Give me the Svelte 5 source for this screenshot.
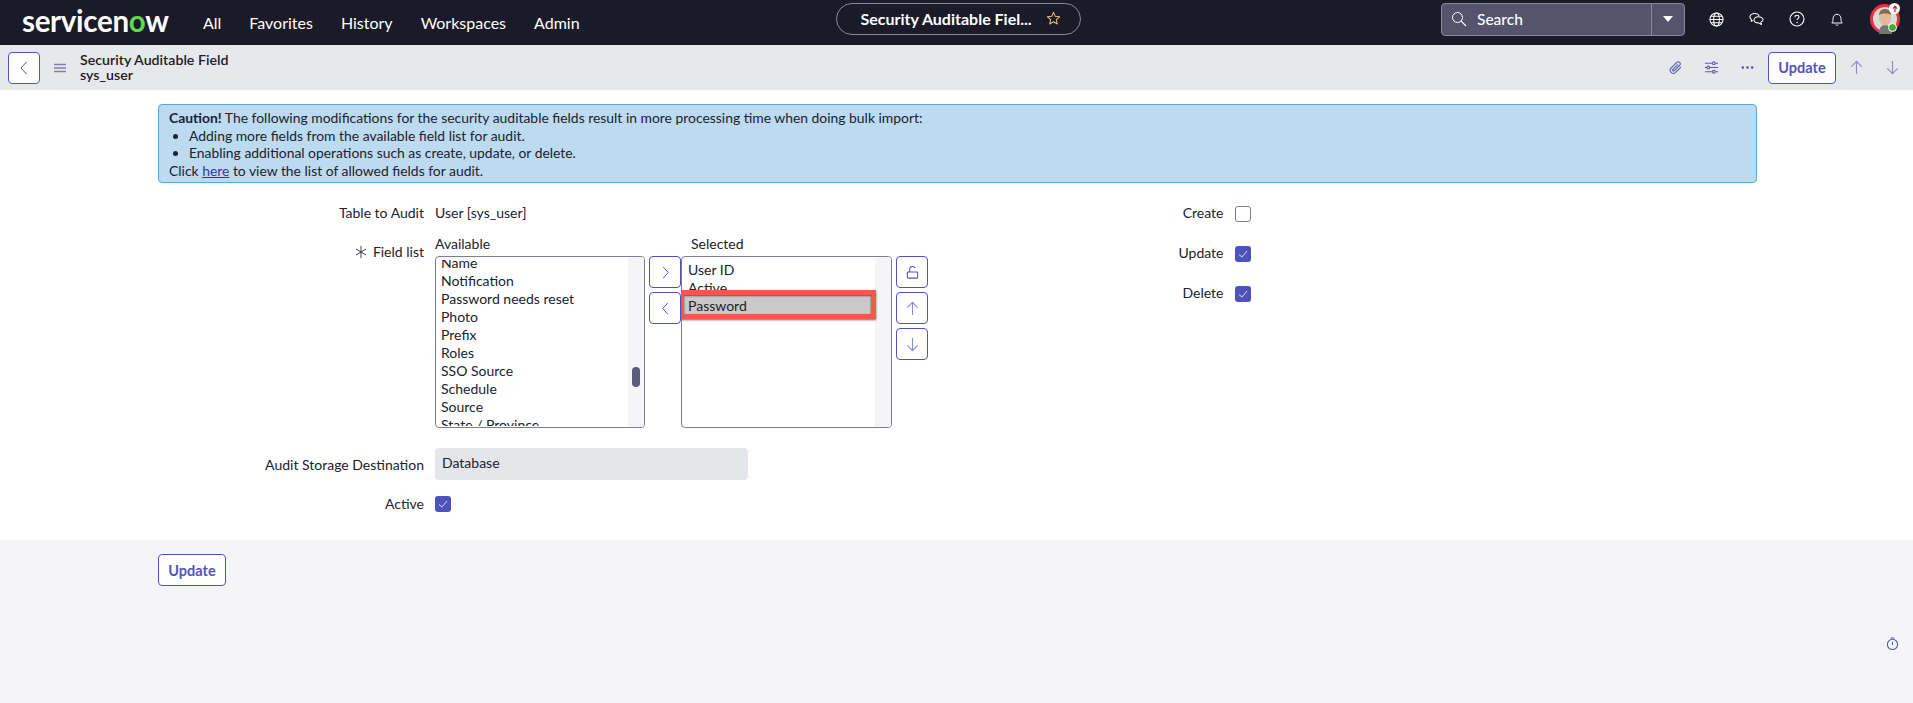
<script>
  const nav = ['All', 'Favorites', 'History', 'Workspaces', 'Admin'];
  const available = ['Name', 'Notification', 'Password needs reset', 'Photo', 'Prefix', 'Roles', 'SSO Source', 'Schedule', 'Source', 'State / Province'];
  const selected = ['User ID', 'Active', 'Password'];
  const ops = [
    { label: 'Create', checked: false },
    { label: 'Update', checked: true },
    { label: 'Delete', checked: true }
  ];
</script>

<div class="page">
  <!-- Top navigation -->
  <header class="topbar">
    <div class="top-left">
      <span class="logo">servicen<span class="logo-o">o</span>w</span>
      <nav class="nav">
        {#each nav as item}
          <span class="nav-item">{item}</span>
        {/each}
      </nav>
    </div>
    <div class="pill">
      <span class="pill-title">Security Auditable Fiel...</span>
      <svg class="star" viewBox="0 0 16 16" width="15" height="15"><path d="M8 1.5l1.9 4.2 4.6.5-3.4 3.1.9 4.5-4-2.3-4 2.3.9-4.5L1.500 6.200l4.600-.5z" fill="none" stroke="#e9c46a" stroke-width="1.100" stroke-linejoin="round"/></svg>
    </div>
    <div class="top-right">
      <div class="search">
        <div class="search-main">
          <svg viewBox="0 0 16 16" width="16" height="16"><circle cx="6.500" cy="6.500" r="5" fill="none" stroke="#fff" stroke-width="1"/><path d="M10.200 10.200L15 15" stroke="#fff" stroke-width="1.100"/></svg>
          <span>Search</span>
        </div>
        <div class="search-caret"><span class="caret"></span></div>
      </div>
      <div class="top-icons">
        <svg viewBox="0 0 16 16" width="15" height="15"><g fill="none" stroke="#fff" stroke-width="1.100"><circle cx="8" cy="8" r="7"/><ellipse cx="8" cy="8" rx="3" ry="7"/><path d="M1 8h14M2 4.500h12M2 11.500h12"/></g></svg>
        <svg viewBox="0 0 16 16" width="15" height="15"><g fill="none" stroke="#fff" stroke-width="1.100" stroke-linejoin="round"><path d="M6 1.500c-2.700 0-5 1.500-5 3.700 0 1.200.7 2.200 1.700 2.900L2.300 10l2.300-1.100"/><path d="M6 1.500c2.400 0 4.300 1.100 4.800 2.800"/><path d="M10 5c-2.600 0-4.700 1.400-4.700 3.300s2.100 3.300 4.700 3.300l3.200 1.700-.5-2.500c1.400-.6 2.300-1.500 2.300-2.500C15 6.400 12.700 5 10 5z"/></g></svg>
        <svg viewBox="0 0 16 16" width="16" height="16"><circle cx="8" cy="8" r="7" fill="none" stroke="#fff" stroke-width="1.100"/><path d="M6 6.200c0-1.200.9-1.900 2-1.900s2 .7 2 1.800c0 1.500-2 1.500-2 3" fill="none" stroke="#fff" stroke-width="1.100"/><circle cx="8" cy="11.500" r=".7" fill="#fff"/></svg>
        <svg viewBox="0 0 16 16" width="14" height="15"><path d="M2 12c1-1 1.500-2 1.500-5S5.500 2 8 2s4.500 2 4.500 5 .5 4 1.500 5z M6.500 14c.5.700 2.500.700 3 0" fill="none" stroke="#fff" stroke-width="1.100" stroke-linejoin="round"/></svg>
      </div>
      <div class="avatar">
        <svg viewBox="0 0 30 30" width="30" height="30">
          <circle cx="15" cy="15" r="13.500" fill="#d8dcd8" stroke="#ee2f44" stroke-width="3"/>
          <path d="M9 30c0-7 3-9 6-9s7 2 7 9z" fill="#6d7a72"/>
          <ellipse cx="15" cy="14" rx="6" ry="7.500" fill="#e2b79a"/>
          <path d="M9 11c0-4 3-6 6-6s6 2 6 6c-2-2-9-2-12 0z" fill="#8a6a4c"/>
        </svg>
        <span class="badge-up"><svg viewBox="0 0 10 10" width="8" height="8"><path d="M5 9V2M2.500 4.500L5 1.500l2.500 3" fill="none" stroke="#c8202f" stroke-width="1.500"/></svg></span>
        <span class="badge-on"></span>
      </div>
    </div>
  </header>

  <!-- Form header -->
  <div class="subbar">
    <div class="sub-left">
      <button class="btn icon-btn">
        <svg viewBox="0 0 16 16" width="16" height="16"><path d="M10.500 2L5 8l5.500 6" fill="none" stroke="#4f52bd" stroke-width="1"/></svg>
      </button>
      <svg class="burger" viewBox="0 0 12 10" width="12" height="10"><path d="M0 1.500h12M0 5h12M0 8.500h12" stroke="#7f82a8" stroke-width="1.400"/></svg>
      <div class="sub-title">
        <div>Security Auditable Field</div>
        <div>sys_user</div>
      </div>
    </div>
    <div class="sub-right">
      <svg viewBox="0 0 16 16" width="15" height="15"><path d="M13.800 7.500l-5.700 5.700a3.300 3.300 0 0 1-4.700-4.700l6-6a2.200 2.200 0 0 1 3.100 3.100l-5.800 5.800a1 1 0 0 1-1.500-1.500l5.300-5.200" fill="none" stroke="#5a5da8" stroke-width="1.200"/></svg>
      <svg viewBox="0 0 16 16" width="15" height="15"><g fill="none" stroke="#5a5da8" stroke-width="1.200"><path d="M1 3.500h8M12 3.500h3M1 8h2M6 8h9M1 12.500h8M12 12.500h3"/><circle cx="10.500" cy="3.500" r="1.500"/><circle cx="4.500" cy="8" r="1.500"/><circle cx="10.500" cy="12.500" r="1.500"/></g></svg>
      <svg viewBox="0 0 16 16" width="15" height="15"><g fill="#4f52a8"><circle cx="3" cy="8" r="1.300"/><circle cx="8" cy="8" r="1.300"/><circle cx="13" cy="8" r="1.300"/></g></svg>
      <button class="btn text-btn">Update</button>
      <svg class="arrow-a" viewBox="0 0 16 16" width="15" height="15"><path d="M8 15V1.500M2.500 7L8 1.500 13.500 7" fill="none" stroke="#8a8dc0" stroke-width="1.200"/></svg>
      <svg class="arrow-b" viewBox="0 0 16 16" width="15" height="15"><path d="M8 1v13.500M2.500 9L8 14.500 13.500 9" fill="none" stroke="#8a8dc0" stroke-width="1.200"/></svg>
    </div>
  </div>

  <main class="main">
    <div class="caution">
      <div><b>Caution!</b> The following modifications for the security auditable fields result in more processing time when doing bulk import:</div>
      <ul>
        <li>Adding more fields from the available field list for audit.</li>
        <li>Enabling additional operations such as create, update, or delete.</li>
      </ul>
      <div>Click <a href="#here">here</a> to view the list of allowed fields for audit.</div>
    </div>

    <div class="form">
      <div class="col">
        <div class="row">
          <div class="label">Table to Audit</div>
          <div>User [sys_user]</div>
        </div>

        <div class="row row-lists">
          <div class="label label-field">
            <svg viewBox="0 0 12 12" width="12" height="12"><path d="M6 0v12M1 3l10 6M11 3L1 9" stroke="#2a2c3c" stroke-width=".9"/></svg>
            Field list
          </div>
          <div class="slush">
            <div class="slush-col">
              <div class="slush-head">Available</div>
              <div class="listbox avail">
                <div class="items items-avail">
                  {#each available as item}
                    <div class="item">{item}</div>
                  {/each}
                </div>
                <div class="track"><span class="thumb"></span></div>
              </div>
            </div>
            <div class="slush-btns">
              <button class="btn icon-btn">
                <svg viewBox="0 0 16 16" width="15" height="15"><path d="M5.500 2L11 8l-5.500 6" fill="none" stroke="#4f52bd" stroke-width="1"/></svg>
              </button>
              <button class="btn icon-btn">
                <svg viewBox="0 0 16 16" width="15" height="15"><path d="M10.500 2L5 8l5.500 6" fill="none" stroke="#4f52bd" stroke-width="1"/></svg>
              </button>
            </div>
            <div class="slush-col">
              <div class="slush-head head-sel">Selected</div>
              <div class="listbox sel">
                <div class="items items-sel">
                  {#each selected as item}
                    <div class="item">{item}</div>
                  {/each}
                </div>
                <div class="track"></div>
                <div class="highlight"><span>Password</span></div>
              </div>
            </div>
            <div class="slush-btns btns-right">
              <button class="btn icon-btn">
                <svg viewBox="0 0 16 16" width="15" height="15"><g fill="none" stroke="#4f52bd" stroke-width="1.100"><rect x="2.500" y="7.500" width="11" height="6.500" rx="1"/><path d="M5 7.500V4.500a3 3 0 0 1 5.800-1"/></g></svg>
              </button>
              <button class="btn icon-btn">
                <svg viewBox="0 0 16 16" width="15" height="15"><path d="M8 15V1.500M2.500 7L8 1.500 13.500 7" fill="none" stroke="#8a8dd8" stroke-width="1.200"/></svg>
              </button>
              <button class="btn icon-btn">
                <svg viewBox="0 0 16 16" width="15" height="15"><path d="M8 1v13.500M2.500 9L8 14.500 13.500 9" fill="none" stroke="#8a8dd8" stroke-width="1.200"/></svg>
              </button>
            </div>
          </div>
        </div>

        <div class="row row-dest">
          <div class="label">Audit Storage Destination</div>
          <div class="readonly">Database</div>
        </div>

        <div class="row row-active">
          <div class="label">Active</div>
          <span class="check on">
            <svg viewBox="0 0 16 16" width="16" height="16"><path d="M4 8.500L7 11l5-6" fill="none" stroke="#d8d9f3" stroke-width="1"/></svg>
          </span>
        </div>
      </div>

      <div class="col col-ops">
        {#each ops as op}
          <div class="row">
            <div class="label">{op.label}</div>
            <span class="check" class:on={op.checked}>
              {#if op.checked}
                <svg viewBox="0 0 16 16" width="16" height="16"><path d="M4 8.500L7 11l5-6" fill="none" stroke="#d8d9f3" stroke-width="1"/></svg>
              {/if}
            </span>
          </div>
        {/each}
      </div>
    </div>
  </main>

  <footer class="footer">
    <button class="btn text-btn">Update</button>
    <svg class="timer" viewBox="0 0 14 14" width="13" height="13"><g fill="none" stroke="#4f52a8" stroke-width="1.100"><circle cx="7" cy="8" r="5.500"/><path d="M5 1h4M7 5.500v3"/></g></svg>
  </footer>
</div>

<style>
  :global(body) {
    margin: 0;
    font-family: Lato, 'Liberation Sans', sans-serif;
    font-size: 14px;
    color: #20222f;
  }

  .page {
    display: flex;
    flex-direction: column;
    height: 703px;
    overflow: hidden;
  }

  .topbar {
    display: grid;
    grid-template-columns: 1fr auto 1fr;
    align-items: center;
    height: 45px;
    background: #1a1a28;
    color: #fff;
  }

  .top-left {
    display: flex;
    align-items: center;
    padding-left: 22px;
  }

  .logo {
    width: 148px;
    margin-top: -4px;
    font-size: 29.500px;
    line-height: 36px;
    font-weight: 700;
    letter-spacing: -0.3px;
    color: #fff;
  }

  .logo-o {
    color: #62d84e;
  }

  .nav {
    display: flex;
    gap: 28px;
    margin-left: 33px;
    font-size: 16px;
  }

  .pill {
    display: flex;
    align-items: center;
    justify-content: space-between;
    box-sizing: border-box;
    width: 245px;
    height: 32px;
    margin-top: -8px;
    margin-left: 3px;
    padding: 0 19px 0 24px;
    border: 1px solid #8a8a96;
    border-radius: 16px;
    font-size: 16px;
    font-weight: 700;
  }

  .top-right {
    display: flex;
    align-items: center;
    justify-content: flex-end;
    padding-right: 13px;
    margin-top: -7px;
  }

  .search {
    display: flex;
    box-sizing: border-box;
    width: 244px;
    height: 33px;
    background: #56546c;
    border: 1px solid #86859a;
    border-radius: 4px;
  }

  .search-main {
    display: flex;
    align-items: center;
    gap: 10px;
    flex: 1;
    padding-left: 9px;
    font-size: 15.500px;
    font-weight: 500;
    border-right: 1px solid #86859a;
  }

  .search-caret {
    display: flex;
    align-items: center;
    justify-content: center;
    width: 32px;
  }

  .caret {
    width: 0;
    height: 0;
    border-left: 5.500px solid transparent;
    border-right: 5.500px solid transparent;
    border-top: 6px solid #fff;
  }

  .top-icons {
    display: flex;
    align-items: center;
    gap: 25px;
    margin-left: 24px;
  }

  .avatar {
    position: relative;
    width: 30px;
    height: 30px;
    margin-left: 26px;
  }

  .badge-up {
    position: absolute;
    top: -1px;
    right: 0;
    display: flex;
    align-items: center;
    justify-content: center;
    width: 11px;
    height: 11px;
    background: #fff;
    border-radius: 50%;
  }

  .badge-on {
    position: absolute;
    right: 3px;
    bottom: 2px;
    width: 7px;
    height: 7px;
    background: #49a832;
    border: 1px solid #fff;
    border-radius: 50%;
  }

  .subbar {
    display: flex;
    justify-content: space-between;
    align-items: center;
    box-sizing: border-box;
    height: 45px;
    background: #e6e8ec;
    padding: 0 13px 0 8px;
  }

  .sub-left {
    display: flex;
    align-items: center;
  }

  .burger {
    margin-left: 14px;
  }

  .sub-title {
    margin: -2px 0 0 14px;
    font-size: 14.200px;
    line-height: 15px;
    font-weight: 600;
    color: #1a1c28;
  }

  .sub-right {
    display: flex;
    align-items: center;
  }

  .sub-right svg {
    margin-right: 21px;
  }

  .sub-right .arrow-a {
    margin-left: 13px;
  }

  .sub-right .arrow-b {
    margin-right: 0;
  }

  .sub-right .text-btn {
    margin-left: -8px;
  }

  .btn {
    display: flex;
    align-items: center;
    justify-content: center;
    box-sizing: border-box;
    height: 32px;
    padding: 0;
    background: #fff;
    border: 1px solid #4f52bd;
    border-radius: 4px;
    font-family: inherit;
    color: #4f52bd;
  }

  .icon-btn {
    width: 32px;
  }

  .text-btn {
    width: 68px;
    font-size: 14.500px;
    font-weight: 700;
  }

  .main {
    box-sizing: border-box;
    height: 450px;
    background: #fff;
    padding: 14px 156px 0 158px;
  }

  .caution {
    box-sizing: border-box;
    height: 79px;
    padding: 4px 10px;
    background: #bcdaf0;
    border: 1px solid #5aa6e0;
    border-radius: 4px;
    font-size: 13.900px;
    line-height: 17.600px;
  }

  .caution ul {
    margin: 0;
    padding-left: 20px;
  }

  .caution a {
    color: #2f3a9e;
  }

  .form {
    display: grid;
    grid-template-columns: 1fr 1fr;
    margin-top: 19px;
  }

  .col {
    display: flex;
    flex-direction: column;
  }

  .col-ops {
    gap: 20px;
  }

  .row {
    display: flex;
    align-items: center;
    gap: 11px;
    min-height: 20px;
  }

  .label {
    flex: none;
    width: 266px;
    text-align: right;
  }

  .row-lists {
    align-items: flex-start;
    margin-top: 13px;
  }

  .label-field {
    display: flex;
    justify-content: flex-end;
    align-items: center;
    gap: 6px;
    padding-top: 8px;
  }

  .slush {
    display: flex;
    margin-top: 0;
  }

  .slush-head {
    height: 21px;
    line-height: 18px;
  }

  .head-sel {
    padding-left: 10px;
  }

  .slush-btns {
    display: flex;
    flex-direction: column;
    gap: 4px;
    padding-top: 21px;
    margin: 0 0 0 4px;
  }

  .btns-right {
    margin-left: 4px;
  }

  .listbox {
    position: relative;
    box-sizing: border-box;
    display: flex;
    height: 172px;
    background: #fff;
    border: 1px solid #7c7e92;
    border-radius: 4px;
    overflow: hidden;
  }

  .avail {
    width: 210px;
  }

  .sel {
    width: 211px;
  }

  .items {
    flex: 1;
    padding-left: 5px;
    overflow: hidden;
    font-size: 14px;
    line-height: 18px;
  }

  .items-avail {
    margin-top: 3px;
    height: 166px;
    padding-top: 0;
  }

  .items-avail .item:first-child {
    margin-top: -6px;
  }

  .items-sel {
    margin-top: 4px;
    padding-left: 6px;
  }

  .track {
    position: relative;
    flex: none;
    width: 16px;
    background: #f5f5f8;
  }

  .thumb {
    position: absolute;
    top: 110px;
    left: 4px;
    width: 8px;
    height: 20px;
    background: #5c5c78;
    border-radius: 4px;
  }

  .highlight {
    position: absolute;
    top: 33px;
    left: -3px;
    box-sizing: border-box;
    width: 197px;
    height: 29px;
    padding: 1px 0 0 4px;
    background: #c9c9c9;
    border: 5px solid #f8574a;
    box-shadow: 0 1px 2px rgba(0, 0, 0, 0.6), inset 0 1px 2px rgba(0, 0, 0, 0.6);
    line-height: 19px;
  }

  .row-dest {
    margin-top: 20px;
  }

  .readonly {
    box-sizing: border-box;
    width: 313px;
    height: 32px;
    padding-left: 7px;
    line-height: 30px;
    background: #e4e6ea;
    border-radius: 4px;
  }

  .row-active {
    margin-top: 13px;
  }

  .check {
    display: block;
    box-sizing: border-box;
    width: 16px;
    height: 16px;
    margin-top: 4px;
    border: 1px solid #7c7e92;
    border-radius: 3px;
    background: #fff;
  }

  .row-active .check {
    margin-top: 1px;
  }

  .check.on {
    border: 0;
    background: #4f52bd;
  }

  .footer {
    flex: 1;
    display: flex;
    justify-content: space-between;
    align-items: flex-start;
    background: #f5f5f8;
    padding: 14px 14px 0 158px;
  }

  .timer {
    margin-top: 83px;
  }
</style>
